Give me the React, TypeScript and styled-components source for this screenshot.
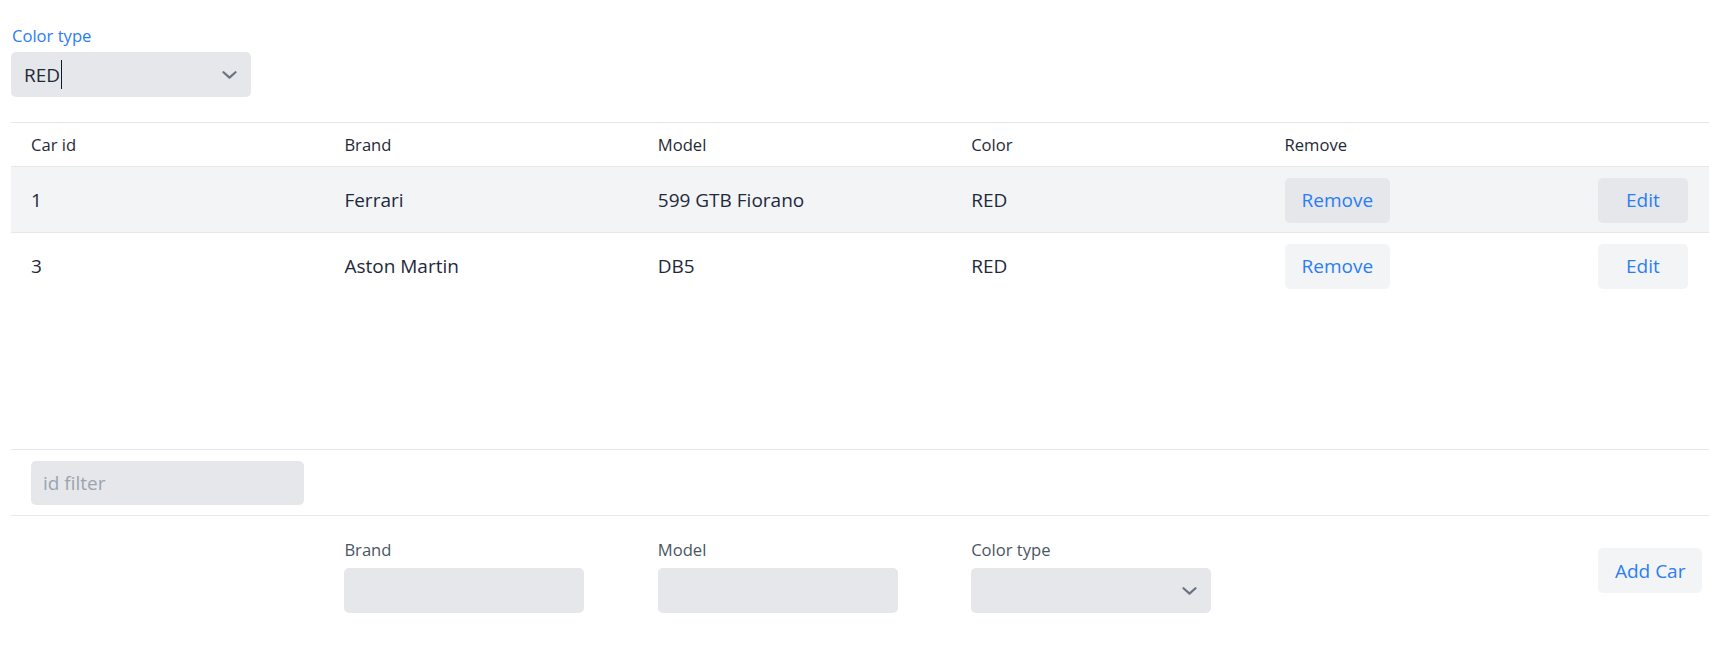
import React from 'react'
import styled, {createGlobalStyle} from 'styled-components'

const cars = [
  {id: 1, brand: 'Ferrari', model: '599 GTB Fiorano', color: 'RED'},
  {id: 3, brand: 'Aston Martin', model: 'DB5', color: 'RED'},
]

const GlobalStyle = createGlobalStyle`
  body {
    margin: 0;
    background: #ffffff;
    font-family: 'Open Sans', 'Noto Sans', sans-serif;
    color: #1f2937;
  }
`

const Chevron = () => (
  <svg width="15" height="8" viewBox="0 0 15 8" fill="none">
    <polyline
      points="1.5,1.2 7.5,6.6 13.5,1.2"
      stroke="#6b7280"
      strokeWidth="2.2"
      strokeLinecap="round"
      strokeLinejoin="round"
    />
  </svg>
)

const App = () => {
  return (
    <>
      <GlobalStyle />
      <Page>
        <TopFilter>
          <TopLabel>Color type</TopLabel>
          <SelectBox>
            <SelectValue>
              RED
              <Caret />
            </SelectValue>
            <Chevron />
          </SelectBox>
        </TopFilter>

        <Table>
          <HeaderRow>
            <HeadCell>Car id</HeadCell>
            <HeadCell>Brand</HeadCell>
            <HeadCell>Model</HeadCell>
            <HeadCell>Color</HeadCell>
            <HeadCell>Remove</HeadCell>
            <HeadCell />
          </HeaderRow>
          <Body>
            {cars.map((car, i) => (
              <Row key={car.id} highlighted={i === 0}>
                <Cell>{car.id}</Cell>
                <Cell>{car.brand}</Cell>
                <Cell>{car.model}</Cell>
                <Cell>{car.color}</Cell>
                <Cell>
                  <ActionButton dark={i === 0}>Remove</ActionButton>
                </Cell>
                <Cell>
                  <ActionButton dark={i === 0}>Edit</ActionButton>
                </Cell>
              </Row>
            ))}
          </Body>
          <FilterRow>
            <Cell>
              <FilterInput placeholder="id filter" />
            </Cell>
          </FilterRow>
          <FormRow>
            <FormCell />
            <FormCell>
              <FieldLabel>Brand</FieldLabel>
              <TextInput />
            </FormCell>
            <FormCell>
              <FieldLabel>Model</FieldLabel>
              <TextInput />
            </FormCell>
            <FormCell>
              <FieldLabel>Color type</FieldLabel>
              <FormSelect>
                <Chevron />
              </FormSelect>
            </FormCell>
            <FormCell />
            <FormCell>
              <ActionButton>Add Car</ActionButton>
            </FormCell>
          </FormRow>
        </Table>
      </Page>
    </>
  )
}

export default App

const columns = 'repeat(5, 313.4px) 1fr'
const blue = '#2a7df7'

const Page = styled.div`
  padding: 23px 0 0 11px;
`

const TopFilter = styled.div`
  display: flex;
  flex-direction: column;
  gap: 4px;
  margin-bottom: 25px;
`

const TopLabel = styled.label`
  font-size: 16.6px;
  line-height: 25px;
  color: ${blue};
  padding-left: 1px;
`

const SelectBox = styled.div`
  box-sizing: border-box;
  width: 240px;
  height: 45px;
  display: flex;
  align-items: center;
  justify-content: space-between;
  padding: 0 14px 0 13px;
  background: #e5e7eb;
  border-radius: 5px;
`

const SelectValue = styled.span`
  display: flex;
  align-items: center;
  font-size: 19px;
  color: #1f2937;
`

const Caret = styled.span`
  display: inline-block;
  width: 1px;
  height: 29px;
  margin-left: 1px;
  background: #111827;
`

const Table = styled.div`
  border-top: 1px solid #e5e7eb;
`

const HeaderRow = styled.div`
  display: grid;
  grid-template-columns: ${columns};
  height: 43px;
  align-items: center;
`

const HeadCell = styled.div`
  padding-left: 20px;
  font-size: 16.6px;
  color: #1f2937;
`

const Body = styled.div`
  height: 283px;
`

const Row = styled.div<{highlighted?: boolean}>`
  display: grid;
  grid-template-columns: ${columns};
  height: 66px;
  box-sizing: border-box;
  align-items: center;
  border-top: 1px solid #e5e7eb;
  background: ${(p) => (p.highlighted ? '#f3f4f6' : '#ffffff')};
`

const Cell = styled.div`
  padding-left: 20px;
  padding-top: 1px;
  font-size: 19px;
  color: #1e293b;
`

const ActionButton = styled.button<{dark?: boolean}>`
  box-sizing: border-box;
  height: 45px;
  min-width: 90px;
  padding: 0 17px;
  border: none;
  border-radius: 5px;
  background: ${(p) => (p.dark ? '#e5e7eb' : '#f3f4f6')};
  color: ${blue};
  font-family: 'Open Sans', 'Noto Sans', sans-serif;
  font-size: 19px;
  cursor: pointer;
`

const FilterRow = styled.div`
  box-sizing: border-box;
  height: 67px;
  display: flex;
  align-items: center;
  border-top: 1px solid #e5e7eb;
  border-bottom: 1px solid #e5e7eb;
`

const FilterInput = styled.input`
  box-sizing: border-box;
  width: 273px;
  height: 44px;
  padding: 0 12px;
  border: none;
  border-radius: 5px;
  background: #e5e7eb;
  font-family: 'Open Sans', 'Noto Sans', sans-serif;
  font-size: 19px;
  color: #1f2937;
  outline: none;

  &::placeholder {
    color: #9ca3af;
  }
`

const FormRow = styled.div`
  display: grid;
  grid-template-columns: ${columns};
  align-items: end;
  padding-top: 22px;
`

const FormCell = styled.div`
  display: flex;
  flex-direction: column;
  align-items: flex-start;
  gap: 6px;
  padding-left: 20px;

  & > button {
    margin-bottom: 20px;
  }
`

const FieldLabel = styled.label`
  font-size: 16.6px;
  line-height: 24px;
  color: #4b5563;
`

const TextInput = styled.input`
  box-sizing: border-box;
  width: 240px;
  height: 45px;
  border: none;
  border-radius: 5px;
  background: #e5e7eb;
  outline: none;
`

const FormSelect = styled.div`
  box-sizing: border-box;
  width: 240px;
  height: 45px;
  display: flex;
  align-items: center;
  justify-content: flex-end;
  padding-right: 14px;
  border-radius: 5px;
  background: #e5e7eb;
`
